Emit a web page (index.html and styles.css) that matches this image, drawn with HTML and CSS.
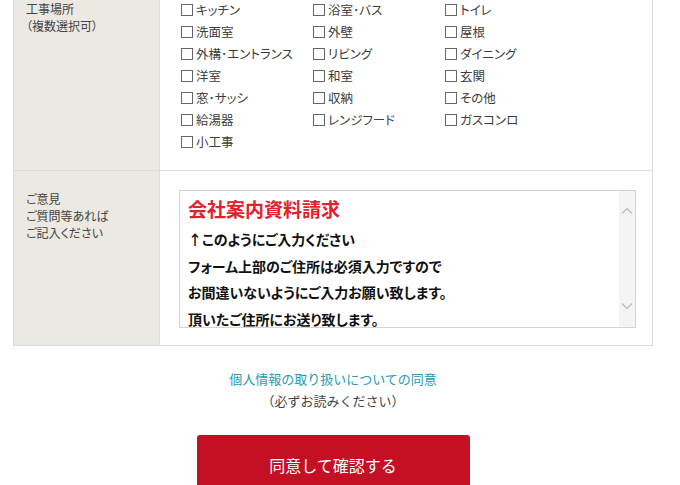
FILE: index.html
```html
<!DOCTYPE html>
<html lang="ja">
  <head>
    <meta charset="UTF-8" />
    <meta name="viewport" content="width=device-width, initial-scale=1.0" />
    <title>お問い合わせ</title>
    <link rel="stylesheet" href="styles.css">
  </head>
  <body>
    <div class="container">
      <div class="form-table">
        <div class="form-row row-places">
          <div class="form-label">
            工事場所<br />（複数選択可）
          </div>
          <div class="form-value">
            <div class="checkbox-group">
              <label><span class="box"></span>キッチン</label>
              <label><span class="box"></span>浴室･バス</label>
              <label><span class="box"></span>トイレ</label>
              <label><span class="box"></span>洗面室</label>
              <label><span class="box"></span>外壁</label>
              <label><span class="box"></span>屋根</label>
              <label><span class="box"></span>外構･エントランス</label>
              <label><span class="box"></span>リビング</label>
              <label><span class="box"></span>ダイニング</label>
              <label><span class="box"></span>洋室</label>
              <label><span class="box"></span>和室</label>
              <label><span class="box"></span>玄関</label>
              <label><span class="box"></span>窓･サッシ</label>
              <label><span class="box"></span>収納</label>
              <label><span class="box"></span>その他</label>
              <label><span class="box"></span>給湯器</label>
              <label><span class="box"></span>レンジフード</label>
              <label><span class="box"></span>ガスコンロ</label>
              <label><span class="box"></span>小工事</label>
            </div>
          </div>
        </div>
        <div class="form-row row-comment">
          <div class="form-label">
            ご意見<br />ご質問等あれば<br />ご記入ください
          </div>
          <div class="form-value">
            <div class="comment-box">
              <div class="comment-text">
                <p class="comment-title">会社案内資料請求</p>
                <p>↑このようにご入力ください</p>
                <p>フォーム上部のご住所は必須入力ですので</p>
                <p>お間違いないようにご入力お願い致します。</p>
                <p>頂いたご住所にお送り致します。</p>
              </div>
              <div class="scrollbar">
                <svg width="12" height="8" viewBox="0 0 12 8">
                  <path d="M1 6.5 L6 1.5 L11 6.5" fill="none" stroke="#bdbdbd" stroke-width="1.4" />
                </svg>
                <svg width="12" height="8" viewBox="0 0 12 8">
                  <path d="M1 1.5 L6 6.5 L11 1.5" fill="none" stroke="#bdbdbd" stroke-width="1.4" />
                </svg>
              </div>
            </div>
          </div>
        </div>
      </div>

      <div class="privacy">
        <a href="#" class="privacy-link">個人情報の取り扱いについての同意</a>
        <p>（必ずお読みください）</p>
      </div>

      <button type="submit" class="submit-btn">同意して確認する</button>
    </div>
  </body>
</html>
```

FILE: styles.css
```css
body {
  font-family: "Noto Sans CJK JP", "Noto Sans", sans-serif;
  margin: 0;
  padding: 0;
  background-color: #fff;
  color: #444;
  font-size: 13px;
}
.container {
  width: 640px;
  margin-left: 13px;
}
.form-table {
  margin-top: -12px;
  border: 1px solid #dcdcdc;
  border-top: none;
}
.form-row {
  display: flex;
  border-top: 1px solid #dcdcdc;
}
.form-label {
  width: 133px;
  flex-shrink: 0;
  padding-left: 12px;
  background-color: #ebe9e2;
  border-right: 1px solid #dcdcdc;
  font-size: 12px;
  line-height: 17px;
  font-feature-settings: "palt";
}
.form-value {
  flex: 1;
}
.row-places .form-label {
  padding-top: 11px;
}
.row-places .form-value {
  padding: 10px 0 17px 21px;
}
.checkbox-group {
  display: grid;
  grid-template-columns: repeat(3, 132px);
  line-height: 22px;
  font-size: 12.5px;
  color: #3c3c3c;
}
.checkbox-group label {
  display: flex;
  align-items: center;
  white-space: nowrap;
  font-feature-settings: "palt";
}
.box {
  display: inline-block;
  width: 10px;
  height: 10px;
  border: 1px solid #666;
  margin-right: 3px;
}
.row-comment .form-label {
  padding-top: 19px;
}
.row-comment .form-value {
  padding: 19px 16px 17px 19px;
}
.comment-box {
  display: flex;
  height: 136px;
  border: 1px solid #d4d4d4;
  overflow: hidden;
}
.comment-text {
  flex: 1;
  padding: 4px 8px 0;
  color: #111;
  font-weight: bold;
  font-size: 14px;
  line-height: 26.5px;
  font-feature-settings: "palt";
}
.comment-text p {
  margin: 0;
  white-space: nowrap;
}
.comment-text .comment-title {
  color: #e3202e;
  font-size: 19px;
  line-height: 27px;
  margin-bottom: 4px;
}
.scrollbar {
  width: 16px;
  background-color: #f4f4f4;
  display: flex;
  flex-direction: column;
  justify-content: space-between;
  align-items: center;
  padding: 16px 0 17px;
}
.privacy {
  text-align: center;
  margin-top: 22px;
  line-height: 22px;
}
.privacy-link {
  color: #2a9ab3;
  text-decoration: none;
}
.privacy p {
  margin: 0;
  color: #444;
}
.submit-btn {
  display: block;
  margin: 23px auto 0;
  width: 273px;
  height: 60px;
  background-color: #c40f25;
  color: #fff;
  border: none;
  border-radius: 3px;
  font-family: "Noto Sans CJK JP", sans-serif;
  font-size: 16px;
  padding-bottom: 2px;
  cursor: pointer;
}
.submit-btn:hover {
  background-color: #9e0a1c;
}
```
